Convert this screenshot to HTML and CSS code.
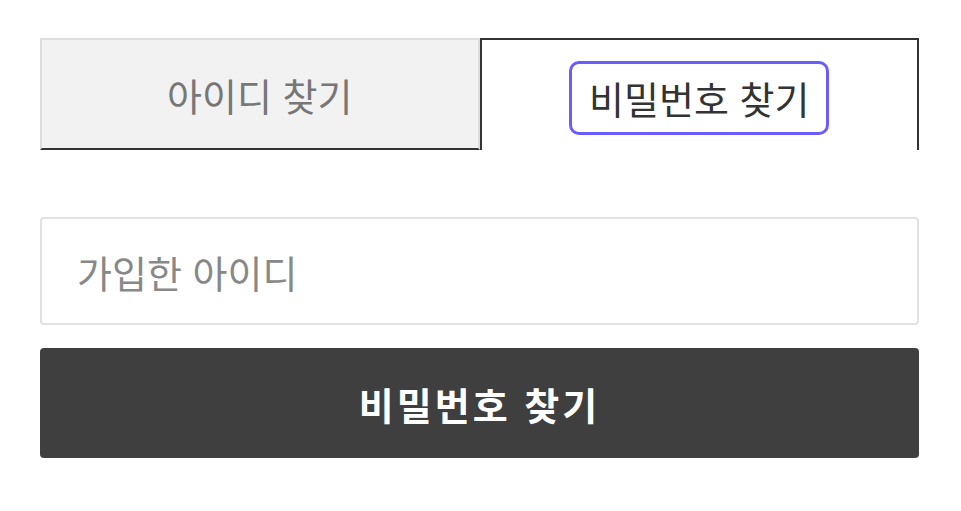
FILE: index.html
```html
<!DOCTYPE html>
<html lang="ko">
  <head>
    <meta charset="UTF-8" />
    <meta name="viewport" content="width=device-width, initial-scale=1.0" />
    <title>비밀번호 찾기</title>
    <link rel="stylesheet" href="styles.css">
  </head>
  <body>
    <div class="find-container">
      <div class="find-tabs">
        <button type="button" class="find-tab">아이디 찾기</button>
        <button type="button" class="find-tab active">
          <span class="tab-label">비밀번호 찾기</span>
        </button>
      </div>

      <form class="find-form">
        <input type="text" placeholder="가입한 아이디" />
        <button type="submit" class="find-submit">비밀번호 찾기</button>
      </form>
    </div>
  </body>
</html>
```

FILE: styles.css
```css
* {
  padding: 0;
  margin: 0;
  box-sizing: border-box;
}

body {
  font-family: "Noto Sans CJK KR", "Noto Sans", sans-serif;
  background: #fff;
  color: #333;
}

.find-container {
  padding: 38px 42px 0 40px;
}

.find-tabs {
  display: flex;
  height: 112px;
}

.find-tab {
  flex: 1;
  font-family: inherit;
  font-size: 38px;
  color: #777;
  background-color: #f2f2f2;
  border: 2px solid #ddd;
  border-bottom: 2px solid #333;
  cursor: pointer;
}

.find-tab.active {
  padding-top: 6px;
  color: #333;
  background-color: #fff;
  border: 2px solid #333;
  border-bottom: none;
}

.tab-label {
  display: inline-block;
  line-height: 48px;
  padding: 10px 17px;
  border: 3px solid #6b5cff;
  border-radius: 10px;
}

.find-form {
  margin-top: 67px;
}

.find-form input {
  display: block;
  width: 100%;
  height: 108px;
  padding: 0 35px;
  font-family: inherit;
  font-size: 38px;
  color: #333;
  border: 2px solid #e2e2e2;
  border-radius: 4px;
  outline: none;
}

.find-form input::placeholder {
  color: #888;
}

.find-submit {
  display: block;
  width: 100%;
  height: 110px;
  margin-top: 23px;
  font-family: inherit;
  font-size: 38px;
  font-weight: bold;
  letter-spacing: 3px;
  color: #fff;
  background-color: #3f3f3f;
  border: none;
  border-radius: 4px;
  cursor: pointer;
}
```
